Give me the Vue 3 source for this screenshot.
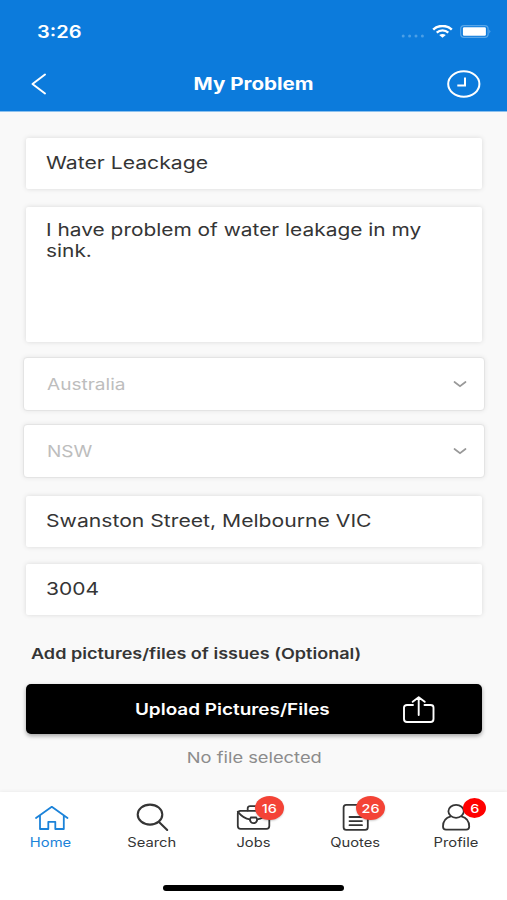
<script setup>
const tabs = [
  { name: 'Home', active: true },
  { name: 'Search' },
  { name: 'Jobs', badge: 16 },
  { name: 'Quotes', badge: 26 },
  { name: 'Profile', badge: 6, small: true },
]
</script>

<template>
  <div class="screen">
    <header class="header">
      <div class="status">
        <span class="time wide left">3:26</span>
        <div class="status-icons">
          <svg width="24" height="4" viewBox="0 0 24 4" fill="#4b9fe6">
            <circle cx="2.2" cy="2" r="1.5" /><circle cx="8.6" cy="2" r="1.5" />
            <circle cx="15" cy="2" r="1.5" /><circle cx="21.4" cy="2" r="1.5" />
          </svg>
          <svg width="21" height="13" viewBox="0 0 21 13" fill="none" stroke="#fff">
            <path d="M1.2 4.6C6.2-.2 14.8-.2 19.8 4.6" stroke-width="2.5" />
            <path d="M4.7 7.7C8 4.7 13 4.7 16.3 7.7" stroke-width="2.3" />
            <path d="M10.5 12.8 7.2 10Q10.5 7.8 13.8 10Z" fill="#fff" stroke="none" />
          </svg>
          <svg width="32" height="13" viewBox="0 0 32 13">
            <rect x=".7" y=".7" width="27.4" height="11.6" rx="3.3" fill="none" stroke="#58a6e9" stroke-width="1.2" />
            <rect x="2.9" y="2.3" width="23" height="8.4" rx="1.2" fill="#fff" />
            <path d="M29.5 4.6Q31.3 6.5 29.5 8.4Z" fill="#7bb8ee" />
          </svg>
        </div>
      </div>
      <div class="nav">
        <svg class="back" width="18" height="24" viewBox="0 0 18 24" fill="none" stroke="#fff" stroke-width="2" stroke-linecap="round" stroke-linejoin="round">
          <path d="M14 2.5 1.5 12 14 21.5" />
        </svg>
        <h1 class="title wide">My Problem</h1>
        <svg class="history" width="34" height="28" viewBox="0 0 34 28" fill="none" stroke="#fff" stroke-width="2">
          <ellipse cx="16.800" cy="14" rx="15.6" ry="12.7" />
          <path d="M18 7.5V15.600H10.300" />
        </svg>
      </div>
    </header>

    <main class="content">
      <div class="field"><span class="wide left title-text">Water Leackage</span></div>
      <div class="field area"><span class="wide left">I have problem of water leakage in my<br />sink.</span></div>
      <div class="select">
        <span class="wide left">Australia</span>
        <svg width="14" height="8" viewBox="0 0 14 8" fill="none" stroke="#999" stroke-width="1.7" stroke-linecap="round"><path d="M1.5 2 7 6.200 12.500 2" /></svg>
      </div>
      <div class="select second">
        <span class="wide left">NSW</span>
        <svg width="14" height="8" viewBox="0 0 14 8" fill="none" stroke="#999" stroke-width="1.7" stroke-linecap="round"><path d="M1.5 2 7 6.200 12.500 2" /></svg>
      </div>
      <div class="field street"><span class="wide left">Swanston Street, Melbourne VIC</span></div>
      <div class="field postcode"><span class="wide left">3004</span></div>
      <p class="label"><span class="wide left">Add pictures/files of issues (Optional)</span></p>
      <button class="upload">
        <span class="wide">Upload Pictures/Files</span>
        <svg width="34" height="30" viewBox="0 0 34 30" fill="none" stroke="#fff" stroke-width="1.9" stroke-linecap="round" stroke-linejoin="round">
          <path d="M11 10H5Q2 10 2 12.5V24Q2 27 5 27H28.5Q31.5 27 31.5 24V12.5Q31.5 10 28.5 10H22.5M16.7 20V2.2M10.7 6.8 16.7 2.2 22.7 6.8" />
        </svg>
      </button>
      <p class="hint"><span class="wide">No file selected</span></p>
    </main>

    <footer class="footer">
      <nav class="tabs">
        <div v-for="t in tabs" :key="t.name" class="tab" :class="{ active: t.active }">
          <svg class="icon" width="40" height="30" viewBox="0 0 40 30" fill="none" stroke="currentColor" stroke-width="1.8" stroke-linejoin="round" stroke-linecap="round">
            <path v-if="t.name === 'Home'" d="M5 16 20.8 4.8 36.5 16M9 13.5V27H17.3V19.8H24.3V27H32.8V13.5" />
            <g v-else-if="t.name === 'Search'" stroke-width="2.1">
              <ellipse cx="18" cy="12.6" rx="12.3" ry="10" /><path d="M27 20 35.2 28" />
            </g>
            <g v-else-if="t.name === 'Jobs'">
              <rect x="4.8" y="8.8" width="31.5" height="18" rx="2.8" />
              <path d="M14.7 8.5V6.2Q14.7 4.2 17.2 4.2H24Q26.5 4.2 26.5 6.2V8.5M4.8 9.8Q10.5 16.5 16.8 17.3M36.3 9.8Q30.5 16.5 24.3 17.3" />
              <path d="M17.8 15.5H23.3L24.3 17.8Q23.3 21.2 20.5 21.2T16.8 17.8Z" />
            </g>
            <g v-else-if="t.name === 'Quotes'">
              <rect x="8.6" y="2.9" width="24.2" height="25" rx="2.6" />
              <path d="M14.5 15H27M14.5 19.1H27M14.5 23.2H27" />
            </g>
            <g v-else>
              <ellipse cx="20.1" cy="9.3" rx="7.7" ry="6.5" />
              <path d="M14.8 14.3C10 15.5 7 19.5 7 24.5Q7 27.7 10 27.7H30.2Q33.2 27.7 33.2 24.5C33.2 19.5 30.2 15.5 25.4 14.3" />
            </g>
          </svg>
          <span v-if="t.badge" class="badge" :class="{ small: t.small }"><span class="wide">{{ t.badge }}</span></span>
          <span class="caption wide">{{ t.name }}</span>
        </div>
      </nav>
      <div class="indicator"></div>
    </footer>
  </div>
</template>

<style>
body { margin: 0; background: #fff; }
</style>

<style scoped>
.screen {
  width: 507px;
  height: 900px;
  display: flex;
  flex-direction: column;
  overflow: hidden;
  color: #353535;
  font-family: Inter, "Liberation Sans", sans-serif;
}
/* Expanded letterforms: the interface uses extra-wide lettering throughout. */
.wide {
  display: inline-block;
  white-space: nowrap;
  transform: scaleX(var(--w, 1.2));
}
.left { transform-origin: left center; }
.header { height: 112px; flex: none; background: #0c7bdc; color: #fff; border-bottom: 1px solid #8cc1ee; box-sizing: border-box; }
.status { height: 62px; display: flex; justify-content: space-between; align-items: center; padding: 1px 15px 0 37px; box-sizing: border-box; }
.time { font-size: 17px; font-weight: 600; --w: 1.18; }
.status-icons { display: flex; align-items: center; gap: 7px; }
.status-icons svg:first-child { margin-top: 8px; }
.nav { height: 44px; display: grid; grid-template-columns: 60px 1fr 60px; align-items: center; padding: 0 26px 0 27px; }
.title { --w: 1.21; margin: 0; justify-self: center; font-size: 17px; line-height: 20px; font-weight: 700; }
.back { margin-left: 4px; }
.history { justify-self: end; }
.content { height: 680px; flex: none; box-sizing: border-box; padding: 26px 25px 0 26px; background: #f9f9f9; }
.field {
  height: 51px;
  box-sizing: border-box;
  display: flex;
  align-items: center;
  padding: 0 20px 2px;
  margin-bottom: 18px;
  background: #fff;
  border-radius: 2px;
  box-shadow: 0 0 5px rgba(0, 0, 0, .13);
  font-size: 17.5px;
}
.title-text { --w: 1.21; }
.field.area { --w: 1.193; height: 135px; align-items: flex-start; padding-top: 12px; line-height: 21px; margin-bottom: 15px; }
.select {
  --w: 1.19;
  height: 54px;
  box-sizing: border-box;
  margin: 0 -3px 12.5px;
  padding: 0 17px 0 23px;
  display: flex;
  justify-content: space-between;
  align-items: center;
  background: #fff;
  border: 1px solid #e4e4e4;
  border-radius: 4px;
  box-shadow: 0 0 5px rgba(0, 0, 0, .08);
  color: #bdbdbd;
  font-size: 16px;
}
.select.second { margin-bottom: 18.5px; }
.street { --w: 1.209; margin-bottom: 17px; }
.postcode { margin-bottom: 29px; }
.label { --w: 1.204; height: 20px; margin: 0 0 20px; padding-left: 5px; font-size: 15px; line-height: 20px; font-weight: 600; }
.upload {
  --w: 1.183;
  width: 456px;
  height: 50px;
  display: flex;
  align-items: center;
  justify-content: center;
  position: relative;
  padding: 0 43px 0 0;
  border: 0;
  border-radius: 5px;
  background: #000;
  color: #fff;
  box-shadow: 0 2px 4px rgba(0, 0, 0, .35);
  font: 600 16px Inter, sans-serif;
}
.upload svg { position: absolute; right: 46px; top: 11px; }
.hint { --w: 1.22; margin: 14px 0 0; text-align: center; font-size: 15px; line-height: 20px; color: #8c8c8c; }
.footer { flex: 1; background: #fff; box-shadow: 0 -1px 3px rgba(0, 0, 0, .05); }
.tabs { display: grid; grid-template-columns: repeat(5, 1fr); height: 93px; }
.tab { display: flex; flex-direction: column; align-items: center; position: relative; padding-top: 10px; }
.active { color: #1c83d9; }
.icon { display: block; }
.caption { --w: 1.18; font-size: 12.5px; line-height: 16px; margin-top: 2.5px; }
.badge {
  position: absolute;
  left: 52px;
  top: 4px;
  width: 29px;
  height: 24px;
  display: grid;
  place-items: center;
  border-radius: 50%;
  background: #f44336;
  color: #fff;
  font-size: 12px;
  font-weight: 500;
  box-shadow: 0 1px 2px rgba(0, 0, 0, .2);
}
.badge.small { left: 57.5px; top: 6px; width: 23px; height: 20px; background: #f00; box-shadow: none; }
.indicator { width: 181px; height: 6px; margin: 0 auto; border-radius: 3px; background: #000; }
</style>
